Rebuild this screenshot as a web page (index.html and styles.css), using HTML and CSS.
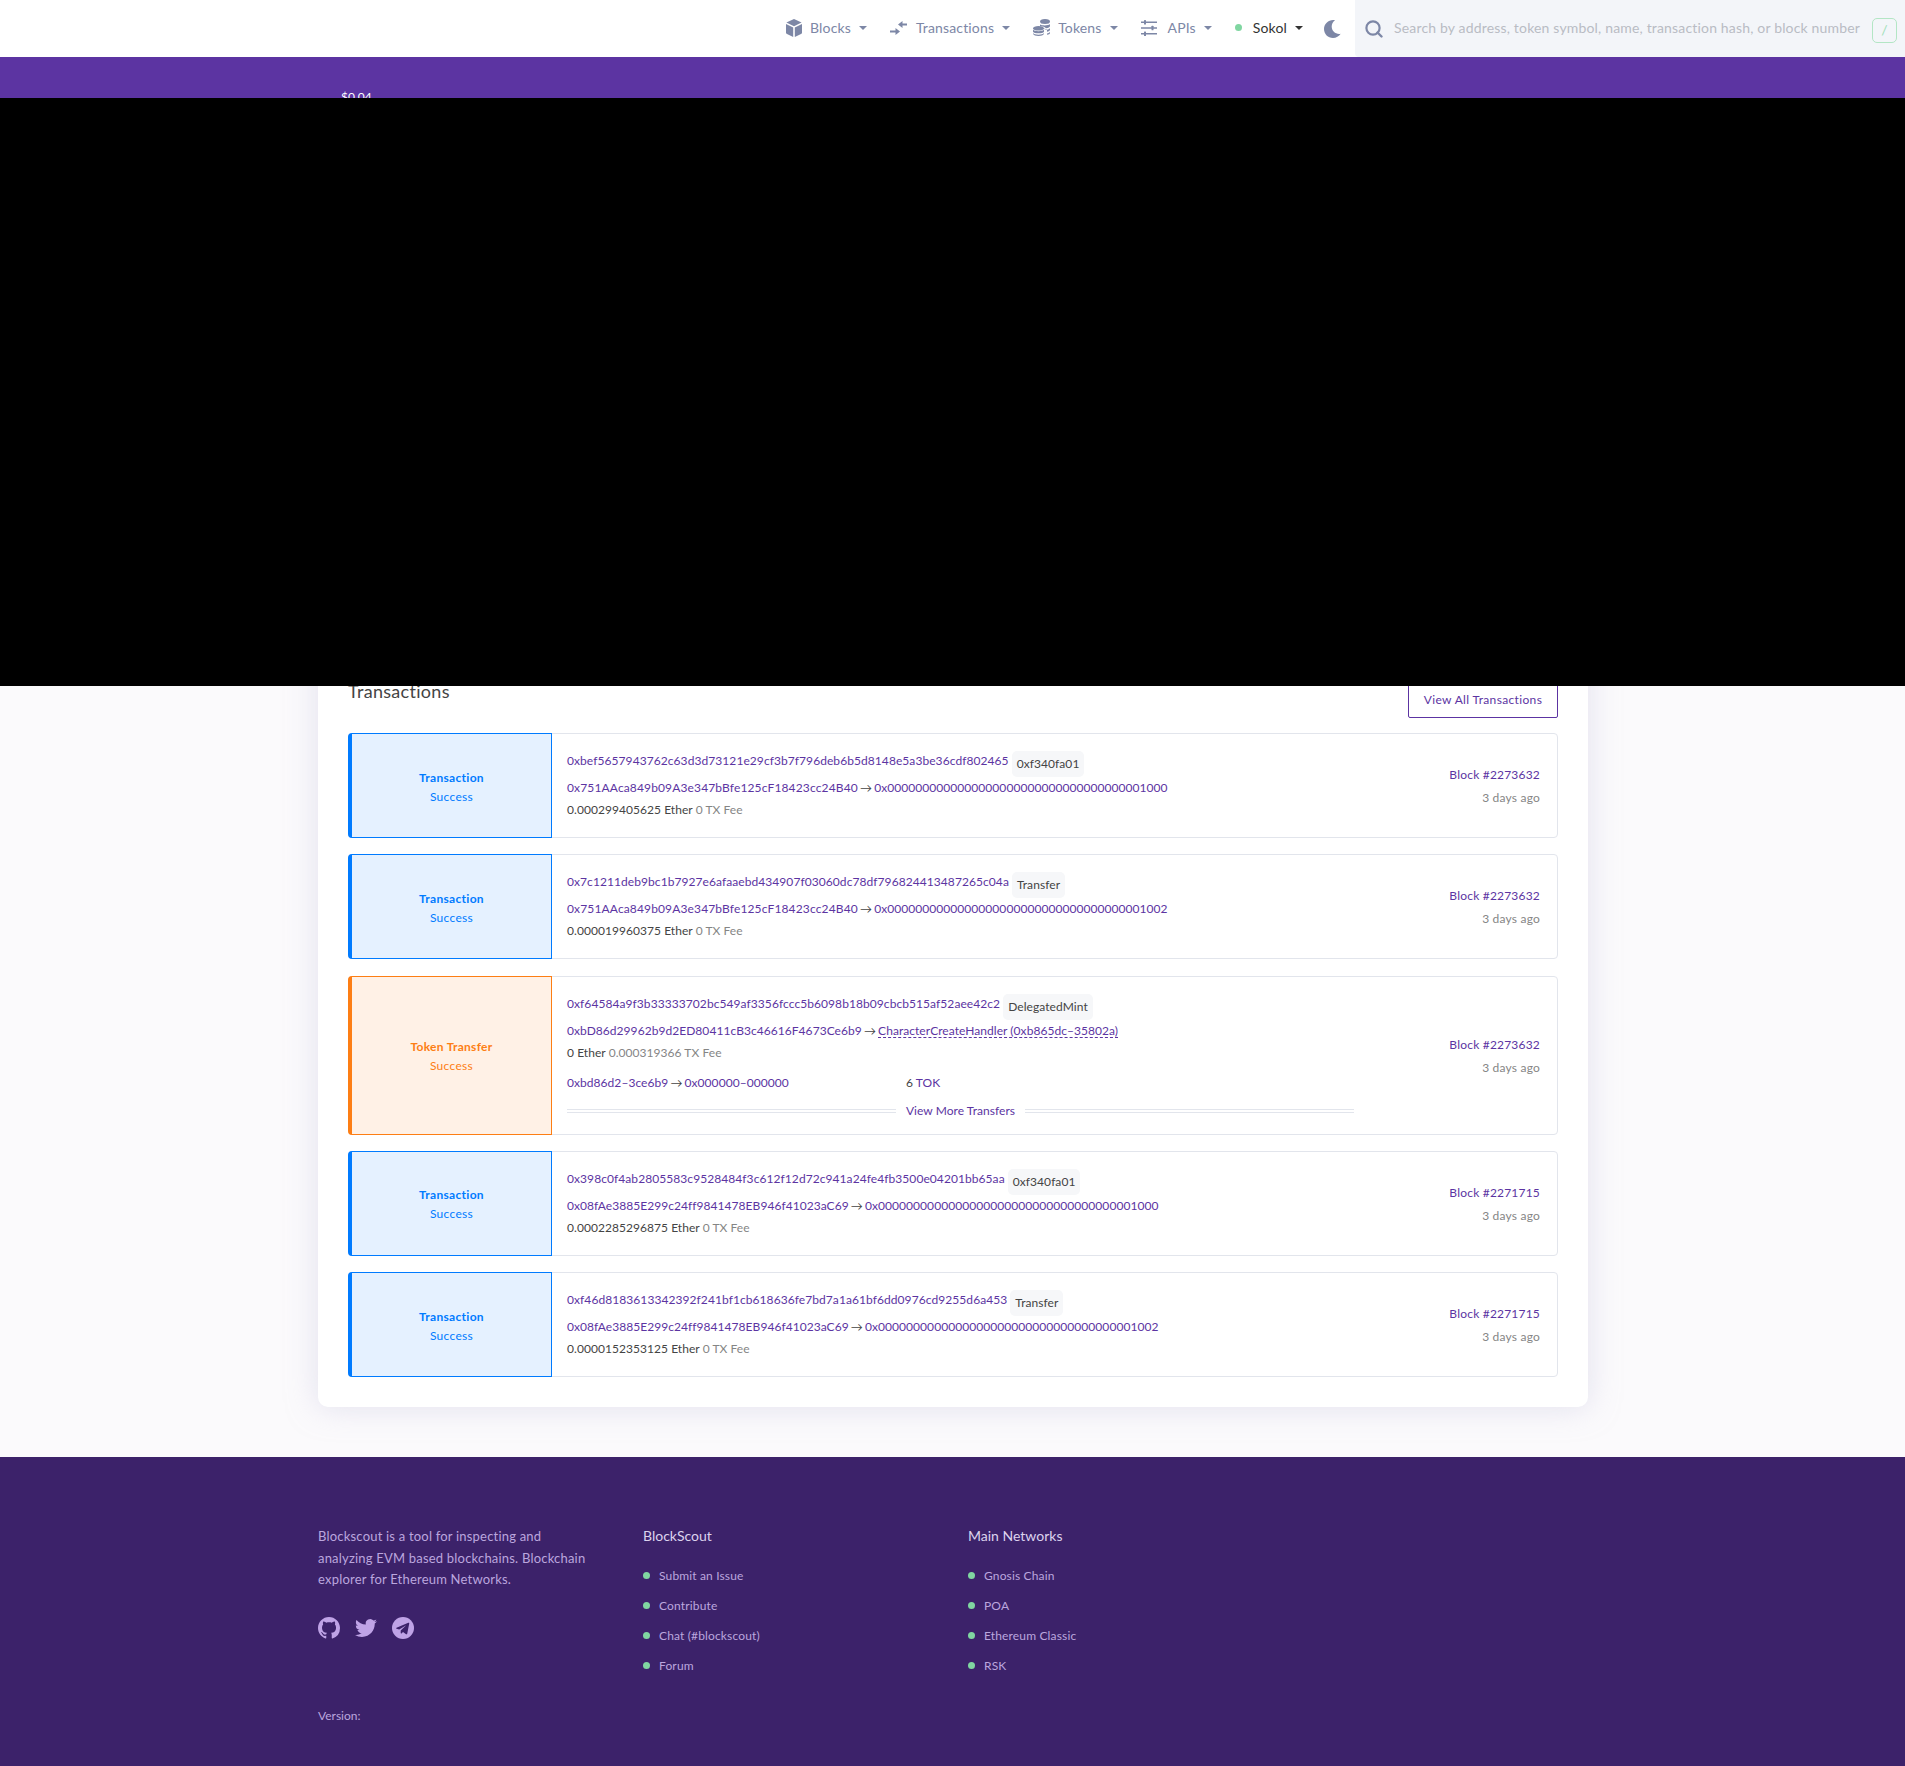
FILE: index.html
```html
<!DOCTYPE html>
<html lang="en">
<head>
  <meta charset="UTF-8">
  <title>Sokol Explorer</title>
  <link rel="stylesheet" href="styles.css">
</head>
<body>
  <nav class="navbar">
    <ul class="nav-list">
      <li class="nav-item">
        <svg class="nav-icon" width="16" height="18" viewBox="0 0 16 18"><path d="M8 0l7.6 3.6L8 7.2.4 3.6z"/><path d="M0 5l7.2 3.4V18L1 15c-.6-.3-1-.8-1-1.5z"/><path d="M16 5L8.800 8.400V18L15 15c.6-.3 1-.8 1-1.500z"/></svg>
        <span>Blocks</span><i class="caret"></i>
      </li>
      <li class="nav-item">
        <svg class="nav-icon" width="18" height="16" viewBox="0 0 18 16"><path d="M0 10.500h5.500V8l4.500 3.500L5.500 15v-2.500H0z"/><path d="M17 3.500h-4.500V1L8 4.500 12.500 8V5.500H17z"/></svg>
        <span>Transactions</span><i class="caret"></i>
      </li>
      <li class="nav-item">
        <svg class="nav-icon" width="17" height="17" viewBox="0 0 17 17"><ellipse cx="12" cy="2.500" rx="5" ry="2.500"/><path d="M7 5.500c1 1 8.500 1.500 10-.5v2c0 1-1.500 2-4 2.200-.8-1.300-3-2-6-2z"/><path d="M8 9.500c3 0 5.500.3 6 1.200 1.500-.2 3-1 3-2v2c0 1-1.500 1.700-3 2v-1.500c-.5-.8-3-1.200-6-1.700zM14 14.500c1.500-.3 3-1 3-2v1.500c0 1-1.500 1.500-3 1.800z"/><ellipse cx="5.500" cy="9.300" rx="5.500" ry="2.300"/><path d="M0 10.500c1 2.200 10 2.200 11 0v2.200c-1 2.200-10 2.200-11 0z"/><path d="M0 14c1 2.200 10 2.200 11 0v.7c-1 3-10 3-11 0z"/></svg>
        <span>Tokens</span><i class="caret"></i>
      </li>
      <li class="nav-item">
        <svg class="nav-icon nav-icon-wide" width="16" height="16" viewBox="0 0 16 16"><path d="M0 1.500h16v1.600H0zM0 7.200h16v1.600H0zM0 12.900h16v1.600H0z"/><rect x="3" y="0" width="2" height="4.600" rx=".6"/><rect x="10.500" y="5.700" width="2" height="4.600" rx=".6"/><rect x="3" y="11.400" width="2" height="4.600" rx=".6"/></svg>
        <span>APIs</span><i class="caret"></i>
      </li>
      <li class="nav-item nav-item-active">
        <i class="net-dot"></i>
        <span>Sokol</span><i class="caret"></i>
      </li>
    </ul>
    <svg class="moon" width="17" height="18" viewBox="0 0 17 18"><path d="M11 .2C5.200-.9 0 3.500 0 9c0 5 4 9 9 9 3.200 0 6-1.600 7.700-4.200-4.600 1-9-2.400-9-7.200C7.700 4 8.900 1.700 11 .2z"/></svg>
    <div class="search">
      <svg class="search-icon" width="18" height="18" viewBox="0 0 18 18"><circle cx="8" cy="8" r="6.600" fill="none" stroke="#7d87a6" stroke-width="2.200"/><path d="M12.500 12.500l4 4" stroke="#7d87a6" stroke-width="2.400" stroke-linecap="round"/></svg>
      <span class="search-text">Search by address, token symbol, name, transaction hash, or block number</span>
      <span class="search-key">/</span>
    </div>
  </nav>

  <section class="hero">
    <div class="hero-price">$0.04</div>
  </section>

  <!-- blacked out part of the capture -->
  <div class="blackout"></div>

  <main class="main">
    <div class="card">
      <div class="card-head">
        <h2 class="card-title">Transactions</h2>
        <a class="btn-line">View All Transactions</a>
      </div>

      <div class="tile">
        <div class="tile-type tile-tx">
          <b>Transaction</b>
          <span>Success</span>
        </div>
        <div class="tile-body">
          <div class="tile-line-hash"><a>0xbef5657943762c63d3d73121e29cf3b7f796deb6b5d8148e5a3be36cdf802465</a><span class="chip">0xf340fa01</span></div>
          <div class="tile-line"><a class="addr-wide">0x751AAca849b09A3e347bBfe125cF18423cc24B40</a> <i class="arrow">→</i> <a>0x0000000000000000000000000000000000001000</a></div>
          <div class="tile-line">0.000299405625 Ether <em>0 TX Fee</em></div>
        </div>
        <div class="tile-side">
          <a>Block #2273632</a>
          <span>3 days ago</span>
        </div>
      </div>

      <div class="tile">
        <div class="tile-type tile-tx">
          <b>Transaction</b>
          <span>Success</span>
        </div>
        <div class="tile-body">
          <div class="tile-line-hash"><a>0x7c1211deb9bc1b7927e6afaaebd434907f03060dc78df796824413487265c04a</a><span class="chip">Transfer</span></div>
          <div class="tile-line"><a class="addr-wide">0x751AAca849b09A3e347bBfe125cF18423cc24B40</a> <i class="arrow">→</i> <a>0x0000000000000000000000000000000000001002</a></div>
          <div class="tile-line">0.000019960375 Ether <em>0 TX Fee</em></div>
        </div>
        <div class="tile-side">
          <a>Block #2273632</a>
          <span>3 days ago</span>
        </div>
      </div>

      <div class="tile">
        <div class="tile-type tile-token">
          <b>Token Transfer</b>
          <span>Success</span>
        </div>
        <div class="tile-body tile-body-token">
          <div class="tile-line-hash"><a>0xf64584a9f3b33333702bc549af3356fccc5b6098b18b09cbcb515af52aee42c2</a><span class="chip">DelegatedMint</span></div>
          <div class="tile-line"><a>0xbD86d29962b9d2ED80411cB3c46616F4673Ce6b9</a> <i class="arrow">→</i> <a class="contract">CharacterCreateHandler (0xb865dc–35802a)</a></div>
          <div class="tile-line">0 Ether <em>0.000319366 TX Fee</em></div>
          <div class="transfer-row">
            <div class="transfer-addr"><a>0xbd86d2–3ce6b9</a> <i class="arrow">→</i> <a>0x000000–000000</a></div>
            <div>6 <a>TOK</a></div>
          </div>
          <div class="more-row">
            <i class="more-rule"></i>
            <a>View More Transfers</a>
            <i class="more-rule"></i>
          </div>
        </div>
        <div class="tile-side tile-side-token">
          <a>Block #2273632</a>
          <span>3 days ago</span>
        </div>
      </div>

      <div class="tile">
        <div class="tile-type tile-tx">
          <b>Transaction</b>
          <span>Success</span>
        </div>
        <div class="tile-body">
          <div class="tile-line-hash"><a>0x398c0f4ab2805583c9528484f3c612f12d72c941a24fe4fb3500e04201bb65aa</a><span class="chip">0xf340fa01</span></div>
          <div class="tile-line"><a>0x08fAe3885E299c24ff9841478EB946f41023aC69</a> <i class="arrow">→</i> <a>0x0000000000000000000000000000000000001000</a></div>
          <div class="tile-line">0.0002285296875 Ether <em>0 TX Fee</em></div>
        </div>
        <div class="tile-side">
          <a>Block #2271715</a>
          <span>3 days ago</span>
        </div>
      </div>

      <div class="tile">
        <div class="tile-type tile-tx">
          <b>Transaction</b>
          <span>Success</span>
        </div>
        <div class="tile-body">
          <div class="tile-line-hash"><a>0xf46d8183613342392f241bf1cb618636fe7bd7a1a61bf6dd0976cd9255d6a453</a><span class="chip">Transfer</span></div>
          <div class="tile-line"><a>0x08fAe3885E299c24ff9841478EB946f41023aC69</a> <i class="arrow">→</i> <a>0x0000000000000000000000000000000000001002</a></div>
          <div class="tile-line">0.0000152353125 Ether <em>0 TX Fee</em></div>
        </div>
        <div class="tile-side">
          <a>Block #2271715</a>
          <span>3 days ago</span>
        </div>
      </div>
    </div>
  </main>

  <footer class="footer">
    <div class="footer-row">
      <div class="footer-col">
        <p class="footer-about">Blockscout is a tool for inspecting and analyzing EVM based blockchains. Blockchain explorer for Ethereum Networks.</p>
        <div class="social">
          <svg width="22" height="22" viewBox="0 0 16 16"><path d="M8 0C3.58 0 0 3.58 0 8c0 3.54 2.29 6.530 5.470 7.590.4.070.550-.170.550-.380 0-.190-.010-.820-.010-1.490-2.010.370-2.530-.490-2.690-.940-.090-.230-.480-.940-.820-1.130-.280-.150-.680-.520-.010-.530.630-.010 1.080.580 1.230.820.720 1.210 1.870.870 2.330.660.070-.520.280-.870.510-1.070-1.780-.200-3.640-.890-3.640-3.950 0-.870.310-1.590.820-2.150-.080-.200-.360-1.020.080-2.120 0 0 .670-.210 2.200.820.640-.180 1.320-.270 2-.270.680 0 1.360.090 2 .270 1.530-1.040 2.200-.820 2.200-.820.440 1.100.160 1.920.080 2.120.510.560.820 1.270.820 2.150 0 3.070-1.870 3.750-3.650 3.950.290.250.540.730.540 1.480 0 1.070-.010 1.930-.010 2.200 0 .210.150.460.550.380A8.013 8.013 0 0016 8c0-4.420-3.580-8-8-8z"/></svg>
          <svg width="22" height="22" viewBox="0 0 24 24"><path d="M23.953 4.570a10 10 0 01-2.825.775 4.958 4.958 0 002.163-2.723c-.951.555-2.005.959-3.127 1.184a4.920 4.920 0 00-8.384 4.482C7.690 8.095 4.067 6.130 1.640 3.162a4.822 4.822 0 00-.666 2.475c0 1.710.870 3.213 2.188 4.096a4.904 4.904 0 01-2.228-.616v.060a4.923 4.923 0 003.946 4.827 4.996 4.996 0 01-2.212.085 4.936 4.936 0 004.604 3.417 9.867 9.867 0 01-6.102 2.105c-.390 0-.779-.023-1.170-.067a13.995 13.995 0 007.557 2.209c9.053 0 13.998-7.496 13.998-13.985 0-.210 0-.420-.015-.630A9.935 9.935 0 0024 4.590z"/></svg>
          <svg width="22" height="22" viewBox="0 0 22 22"><circle cx="11" cy="11" r="11"/><path fill="#3c226a" d="M4.500 10.800l11.800-5c.6-.2 1.100.2.900.9l-2 10c-.1.600-.6.800-1.100.5l-3.100-2.300-1.500 1.500c-.3.300-.8.100-.8-.3v-2.600l5.500-5.200-7 4.300-2.600-.9c-.6-.2-.6-.7-.1-.9z"/></svg>
        </div>
      </div>
      <div class="footer-col">
        <h3 class="footer-head">BlockScout</h3>
        <ul class="footer-list">
          <li>Submit an Issue</li>
          <li>Contribute</li>
          <li>Chat (#blockscout)</li>
          <li>Forum</li>
        </ul>
      </div>
      <div class="footer-col">
        <h3 class="footer-head">Main Networks</h3>
        <ul class="footer-list">
          <li>Gnosis Chain</li>
          <li>POA</li>
          <li>Ethereum Classic</li>
          <li>RSK</li>
        </ul>
      </div>
    </div>
    <div class="footer-version">Version:</div>
  </footer>
</body>
</html>
```

FILE: styles.css
```css
:root {
  --primary: #5c34a2;
  --footer: #3c226a;
  --text: #444;
  --muted: #858585;
  --nav: #7d87a6;
  --blue: #007bff;
  --orange: #fd7e14;
  --border: #e2e5ec;
  --green: #80d6a1;
}
* {
  box-sizing: border-box;
  margin: 0;
  padding: 0;
}
body {
  position: relative;
  background-color: #fbfafc;
  color: var(--text);
  font-family: "Lato", "Noto Sans", sans-serif;
  font-size: 12px;
}
a {
  color: var(--primary);
}
ul {
  list-style: none;
}
em {
  font-style: normal;
  color: var(--muted);
}

/* navbar */
.navbar {
  display: flex;
  align-items: center;
  justify-content: flex-end;
  height: 57px;
  background-color: #fff;
}
.nav-list {
  display: flex;
  align-items: center;
  gap: 23px;
  padding-bottom: 2px;
  letter-spacing: .15px;
}
.nav-item {
  display: flex;
  align-items: center;
  color: var(--nav);
  font-size: 14px;
}
.nav-icon {
  fill: var(--nav);
  margin-right: 8px;
}
.nav-icon-wide {
  margin-right: 11px;
}
.caret {
  width: 0;
  height: 0;
  margin-left: 8px;
  border-left: 4px solid transparent;
  border-right: 4px solid transparent;
  border-top: 4px solid var(--nav);
}
.nav-item-active {
  color: #333;
}
.nav-item-active .caret {
  border-top-color: #333;
}
.net-dot {
  width: 7px;
  height: 7px;
  margin-right: 11px;
  border-radius: 50%;
  background-color: var(--green);
}
.moon {
  fill: var(--nav);
  margin: 0 14px 0 21px;
}
.search {
  display: flex;
  align-items: center;
  width: 550px;
  height: 57px;
  padding: 0 8px 0 10px;
  background-color: #f3f5f9;
  border-bottom-left-radius: 4px;
}
.search-icon {
  flex-shrink: 0;
  margin-right: 11px;
}
.search-text {
  flex: 1;
  color: #b9bcc4;
  font-size: 14px;
  letter-spacing: .17px;
  white-space: nowrap;
  margin-top: -3px;
}
.search-key {
  width: 25px;
  height: 25px;
  border: 1.5px solid #b3e6c5;
  border-radius: 5px;
  color: #a0e0b8;
  font-size: 14px;
  line-height: 22px;
  text-align: center;
  margin-top: 3px;
}

/* purple band, mostly under the black box */
.hero {
  height: 560px;
  background-color: var(--primary);
  padding: 32px 0 0 341px;
}
.hero-price {
  color: #fff;
  font-size: 12px;
}
.blackout {
  position: absolute;
  top: 98px;
  left: 0;
  width: 100%;
  height: 588px;
  background-color: #000;
  z-index: 5;
}

/* card */
.main {
  padding: 0 317px 50px 318px;
}
.card {
  background-color: #fff;
  border-radius: 10px;
  box-shadow: 0 0 30px rgba(202,199,226,.5);
  padding: 109px 30px 30px;
  margin-top: -47px;
}
.card-head {
  display: flex;
  justify-content: space-between;
  align-items: flex-start;
  margin-bottom: 15px;
}
.card-title {
  font-size: 18px;
  font-weight: 400;
  line-height: 24px;
  letter-spacing: .3px;
}
.btn-line {
  display: block;
  width: 150px;
  height: 36px;
  margin-top: 3px;
  border: 1px solid var(--primary);
  border-radius: 2px;
  font-size: 12px;
  letter-spacing: .35px;
  line-height: 34px;
  text-align: center;
}

/* tiles */
.tile {
  display: flex;
  min-height: 105px;
  margin-bottom: 16.250px;
  border: 1px solid var(--border);
  border-radius: 4px;
  background-color: #fff;
}
.tile:last-child {
  margin-bottom: 0;
}
.tile-type {
  display: flex;
  flex-direction: column;
  align-items: center;
  justify-content: center;
  flex-shrink: 0;
  width: 204px;
  margin: -1px 0 -1px -1px;
  padding-top: 2px;
  border: 1px solid;
  border-left-width: 4px;
  border-radius: 4px 0 0 4px;
  line-height: 19px;
  font-size: 12px;
  letter-spacing: .3px;
}
.tile-type b {
  font-weight: 700;
}
.tile-tx {
  color: var(--blue);
  border-color: var(--blue);
  background-color: #e5f1ff;
}
.tile-token {
  color: var(--orange);
  border-color: var(--orange);
  background-color: #fff1e6;
}
.tile-body {
  flex: 1;
  padding: 17px 0 0 15px;
  letter-spacing: .05px;
}
.tile-body-token {
  padding-bottom: 12px;
}
.tile-line-hash {
  display: flex;
  align-items: flex-start;
  height: 26px;
  letter-spacing: .07px;
}
.tile-line-hash a {
  line-height: 20px;
}
.chip {
  height: 26px;
  margin-left: 3px;
  padding: 0 5px;
  border-radius: 5px;
  background-color: #f6f7f9;
  line-height: 26px;
  font-size: 12px;
}
.tile-line {
  line-height: 22px;
  white-space: nowrap;
}
.addr-wide {
  letter-spacing: .14px;
}
.arrow {
  font-style: normal;
  margin: 0 -1px;
}
.contract {
  text-decoration: underline dashed var(--primary);
  text-underline-offset: 2px;
}
.transfer-row {
  display: flex;
  margin-top: 8px;
  line-height: 22px;
}
.transfer-addr {
  width: 339px;
}
.more-row {
  display: flex;
  align-items: center;
  width: 787px;
  margin-top: 6px;
  line-height: 22px;
}
.more-rule {
  flex: 1;
  height: 4px;
  border-top: 1px solid var(--border);
  border-bottom: 1px solid var(--border);
}
.more-row a {
  padding: 0 10px;
}
.tile-side {
  display: flex;
  flex-direction: column;
  align-items: flex-end;
  gap: 4px;
  flex-shrink: 0;
  width: 140px;
  padding: 31px 17px 0 0;
  line-height: 19px;
  letter-spacing: .2px;
}
.tile-side span {
  color: var(--muted);
}
.tile-side-token {
  padding-top: 58px;
}

/* footer */
.footer {
  height: 309px;
  background-color: var(--footer);
  padding: 69px 318px 0;
  color: #bba6de;
}
.footer-row {
  display: flex;
  height: 180px;
}
.footer-col {
  width: 325px;
}
.footer-about {
  width: 280px;
  font-size: 13px;
  letter-spacing: .2px;
  line-height: 21.500px;
}
.social {
  display: flex;
  gap: 15px;
  margin-top: 26px;
}
.social svg {
  fill: #bfa3e6;
}
.footer-head {
  color: #dcd3ee;
  font-size: 14px;
  font-weight: 400;
  line-height: 20px;
  margin-bottom: 14px;
}
.footer-list li {
  display: flex;
  align-items: center;
  height: 30px;
  letter-spacing: .15px;
}
.footer-list li::before {
  content: "";
  width: 7px;
  height: 7px;
  margin-right: 9px;
  border-radius: 50%;
  background-color: var(--green);
}
.footer-version {
  line-height: 20px;
}
```
